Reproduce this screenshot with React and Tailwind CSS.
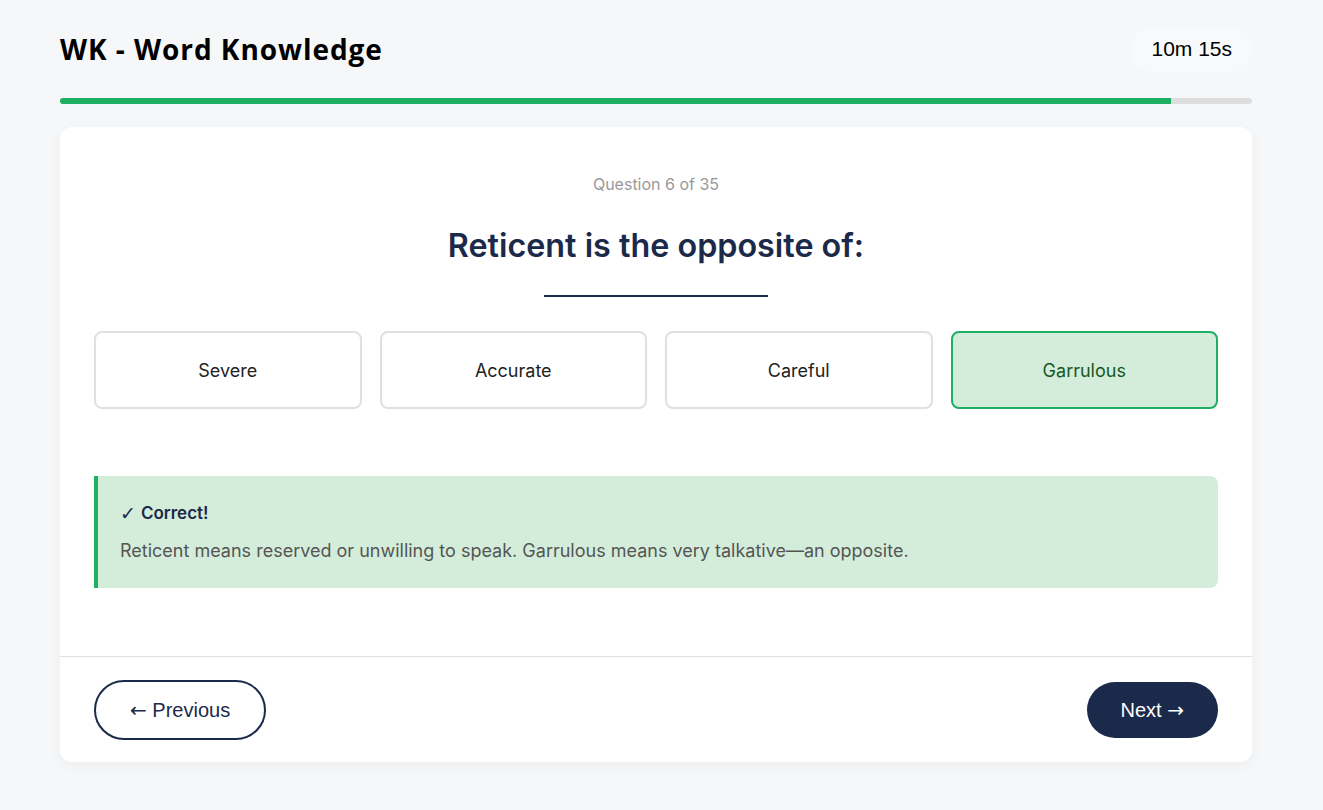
import React from 'react';

const options = ['Severe', 'Accurate', 'Careful', 'Garrulous'];
const selected = 'Garrulous';

// Answer option
function Option({ label, active }) {
  const base = 'h-[78px] flex items-center justify-center rounded-lg border-2 text-[18px]';
  const look = active
    ? 'bg-[#d4edda] border-[#1db063] text-[#155724]'
    : 'bg-white border-[#e0e0e0] text-[#222]';
  return <div className={`${base} ${look}`}>{label}</div>;
}

const arrowFont = "font-['DejaVu_Sans',sans-serif]";

export default function App() {
  const progress = 93.2;

  return (
    <div className="min-h-[810px] bg-[#f6f7f9] pl-[60px] pt-[26px] font-['Inter',sans-serif]">
      <div className="w-[1192px]">
        {/* Header */}
        <div className="flex items-center justify-between h-[46px]">
          <h1 className="text-[28px] font-bold text-black font-['Open_Sans',sans-serif] tracking-[0.95px]">
            WK - Word Knowledge
          </h1>
          <div className="h-[46px] px-5 flex items-center rounded-full bg-[#f8f9fa] font-['Liberation_Sans',Arial,sans-serif] text-[21px] text-black">
            10m 15s
          </div>
        </div>

        {/* Progress */}
        <div className="mt-[26px] h-[6px] rounded-full bg-[#dddddd] overflow-hidden">
          <div className="h-full bg-[#1db063]" style={{ width: `${progress}%` }} />
        </div>

        {/* Card */}
        <div className="mt-[23px] bg-white rounded-xl shadow-[0_4px_16px_rgba(0,0,0,0.04)]">
          <div className="px-[34px] pt-[45px] pb-[68px]">
            <p className="text-center text-base text-[#999] leading-6">Question 6 of 35</p>
            <h2 className="mt-[30px] text-center text-[32.3px] leading-10 font-semibold text-[#1b2a4a]">
              Reticent is the opposite of:
            </h2>
            <div className="mx-auto mt-[29px] w-[224px] h-[2px] bg-[#1b2a4a]" />

            <div className="mt-[34px] grid grid-cols-4 gap-[18px]">
              {options.map((o) => (
                <Option key={o} label={o} active={o === selected} />
              ))}
            </div>

            <div className="mt-[67px] bg-[#d4edda] border-l-4 border-[#1db063] rounded-r-lg pl-[22px] pr-6 py-6">
              <p className="h-[27px] flex items-center gap-[5px] text-[17px] font-semibold text-[#1b2a4a]">
                <span className={`${arrowFont} text-[19px] font-bold leading-none`}>✓</span>
                <span>Correct!</span>
              </p>
              <p className="mt-[10px] text-[18px] leading-[27px] text-[#555]">
                Reticent means reserved or unwilling to speak. Garrulous means very talkative—an opposite.
              </p>
            </div>
          </div>

          {/* Footer */}
          <div className="border-t border-[#e0e0e0] px-[34px] pt-[23px] pb-[22px] flex items-center justify-between font-['Liberation_Sans',Arial,sans-serif]">
            <button className="px-[34px] py-4 leading-6 text-[20px] rounded-full border-2 border-[#1b2a4a] text-[#1b2a4a] bg-white">
              <span className={arrowFont}>←</span> Previous
            </button>
            <button className="px-[34px] py-4 leading-6 text-[20px] rounded-full bg-[#1b2a4a] text-white">
              Next <span className={arrowFont}>→</span>
            </button>
          </div>
        </div>
      </div>
    </div>
  );
}
